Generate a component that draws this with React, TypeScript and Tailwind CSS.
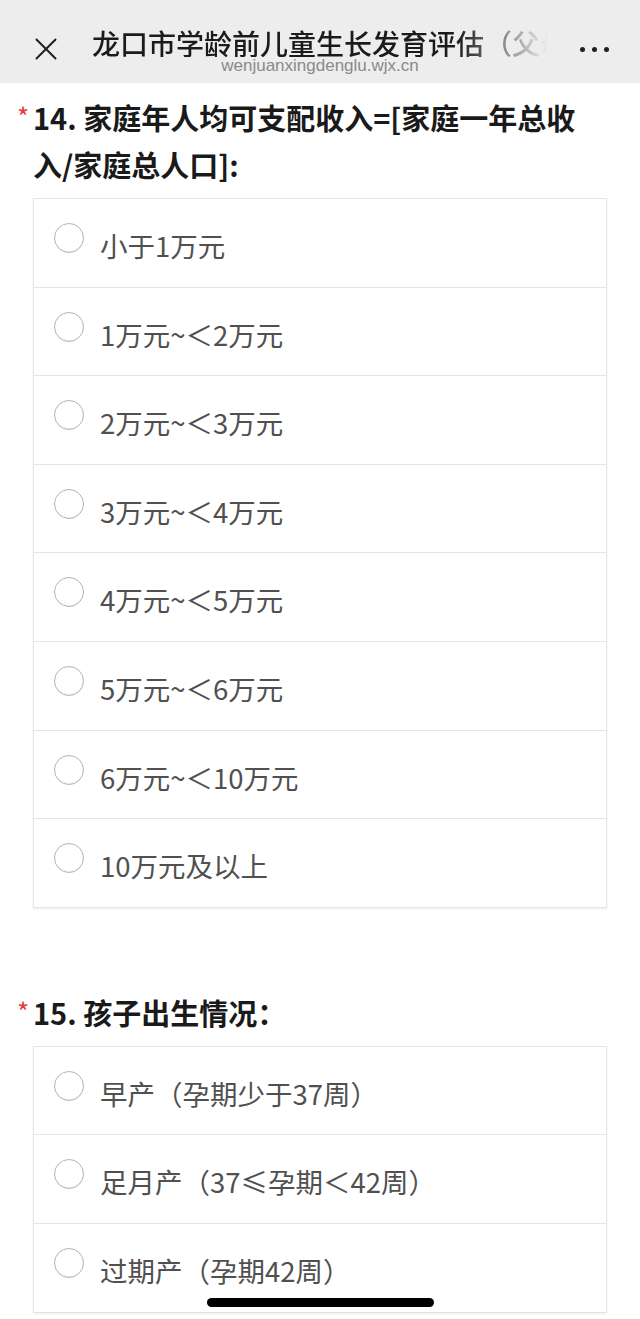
import React from 'react';

const FONT = { fontFamily: '"Noto Sans CJK SC", "Noto Sans", sans-serif' };

interface Question {
  num: number;
  lines: string[];
  options: string[];
}

const questions: Question[] = [
  {
    num: 14,
    lines: ['14. 家庭年人均可支配收入=[家庭一年总收', '入/家庭总人口]:'],
    options: [
      '小于1万元',
      '1万元~＜2万元',
      '2万元~＜3万元',
      '3万元~＜4万元',
      '4万元~＜5万元',
      '5万元~＜6万元',
      '6万元~＜10万元',
      '10万元及以上',
    ],
  },
  {
    num: 15,
    lines: ['15. 孩子出生情况：'],
    options: ['早产（孕期少于37周）', '足月产（37≤孕期＜42周）', '过期产（孕期42周）'],
  },
];

const Header: React.FC = () => (
  <header className="h-[83px] bg-[#ededed] flex items-start">
    <div className="w-[92px] pl-[35px] pt-[38px]">
      <svg width="22" height="22" viewBox="0 0 22 22" fill="none" stroke="#1f1f1f" strokeWidth="2" strokeLinecap="round">
        <path d="M1.5 1.5 L20.5 20.5" />
        <path d="M20.5 1.5 L1.5 20.5" />
      </svg>
    </div>
    <div className="w-[456px] pt-[29px] flex flex-col items-center">
      <div className="w-full overflow-hidden whitespace-nowrap text-[28px] leading-[28px] font-medium text-[#1b1b1b] [mask-image:linear-gradient(to_right,black_80%,transparent_100%)]">
        龙口市学龄前儿童生长发育评估（父母填写）
      </div>
      <div className="text-[17px] leading-[16px] mt-[1px] text-[#8a8a8a]" style={{ fontFamily: '"Liberation Sans", Arial, sans-serif' }}>
        wenjuanxingdenglu.wjx.cn
      </div>
    </div>
    <div className="flex-1 flex justify-end pr-[31px] pt-[47px] gap-[7px]">
      <span className="w-[5px] h-[5px] rounded-full bg-[#1f1f1f]" />
      <span className="w-[5px] h-[5px] rounded-full bg-[#1f1f1f]" />
      <span className="w-[5px] h-[5px] rounded-full bg-[#1f1f1f]" />
    </div>
  </header>
);

const Option: React.FC<{ label: string; first: boolean }> = ({ label, first }) => (
  <div className={`flex items-start pl-[20px] pt-[26px] pb-[21.6px] bg-white ${first ? '' : 'border-t border-[#e4e4e4]'}`}>
    <span className="mt-[-2px] w-[30px] h-[30px] rounded-full border-[1.5px] border-[#b3b3b3] bg-white shadow-[inset_0_-1px_1px_rgba(0,0,0,0.06)] shrink-0" />
    <span className="ml-[16px] text-[27.5px] leading-[40px] text-[#505050]">{label}</span>
  </div>
);

const QuestionBlock: React.FC<{ q: Question; first: boolean }> = ({ q, first }) => (
  <section className={first ? 'pt-[11px]' : 'pt-[81px]'}>
    <div className="flex pl-[17px] pr-[10px]">
      <span className="w-[16px] pt-[9px] text-[#e23b3b] text-[26px] leading-[26px]">*</span>
      <h2 className="text-[29px] leading-[47px] font-bold text-[#1a1a1a] whitespace-nowrap">
        {q.lines.map((l, i) => (
          <div key={i}>{l}</div>
        ))}
      </h2>
    </div>
    <div className="mx-[33px] mt-[10px] border border-[#e4e4e4] shadow-[0_1px_2px_rgba(0,0,0,0.08)]">
      {q.options.map((o, i) => (
        <Option key={o} label={o} first={i === 0} />
      ))}
    </div>
  </section>
);

export default function App() {
  return (
    <div className="relative w-[640px] h-[1319px] overflow-hidden bg-white" style={FONT}>
      <Header />
      {questions.map((q, i) => (
        <QuestionBlock key={q.num} q={q} first={i === 0} />
      ))}
      <div className="absolute left-[207px] bottom-[12px] w-[227px] h-[9px] rounded-full bg-black" />
    </div>
  );
}
